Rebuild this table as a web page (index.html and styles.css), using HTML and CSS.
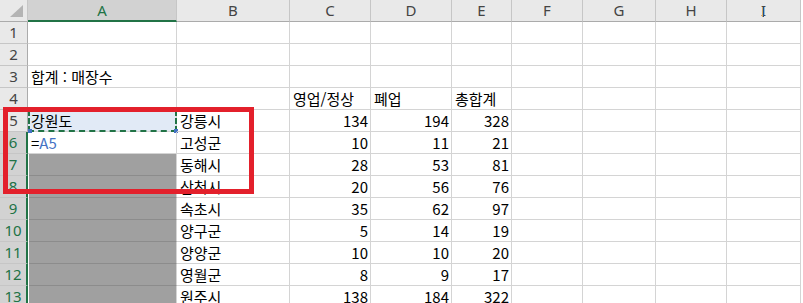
FILE: index.html
```html
<!DOCTYPE html>
<html lang="ko">
<head>
  <meta charset="UTF-8" />
  <meta name="viewport" content="width=device-width, initial-scale=1.0" />
  <title>매장수 집계</title>
  <link rel="stylesheet" href="styles.css">
</head>
<body>
  <div class="sheet">
    <div class="row head">
      <div class="corner"><span class="tri"></span></div>
      <div class="col on">A</div>
      <div class="col">B</div>
      <div class="col">C</div>
      <div class="col">D</div>
      <div class="col">E</div>
      <div class="col">F</div>
      <div class="col">G</div>
      <div class="col">H</div>
      <div class="col">I<span class="ibeam"></span></div>
    </div>

    <div class="row"><div class="num">1</div><div></div><div></div><div></div><div></div><div></div><div></div><div></div><div></div><div></div></div>
    <div class="row"><div class="num">2</div><div></div><div></div><div></div><div></div><div></div><div></div><div></div><div></div><div></div></div>
    <div class="row"><div class="num">3</div><div>합계 : 매장수</div><div></div><div></div><div></div><div></div><div></div><div></div><div></div><div></div></div>
    <div class="row"><div class="num">4</div><div></div><div></div><div>영업/정상</div><div>폐업</div><div>총합계</div><div></div><div></div><div></div><div></div></div>

    <div class="row">
      <div class="num">5</div>
      <div class="ref">강원도
        <span class="h tl"></span><span class="h tr"></span><span class="h bl"></span><span class="h br"></span>
      </div>
      <div>강릉시</div><div class="n">134</div><div class="n">194</div><div class="n">328</div><div></div><div></div><div></div><div></div>
    </div>
    <div class="row"><div class="num sel">6</div><div class="active">=<span class="link">A5</span></div><div>고성군</div><div class="n">10</div><div class="n">11</div><div class="n">21</div><div></div><div></div><div></div><div></div></div>
    <div class="row"><div class="num sel">7</div><div class="fill"></div><div>동해시</div><div class="n">28</div><div class="n">53</div><div class="n">81</div><div></div><div></div><div></div><div></div></div>
    <div class="row"><div class="num sel">8</div><div class="fill"></div><div>삼척시</div><div class="n">20</div><div class="n">56</div><div class="n">76</div><div></div><div></div><div></div><div></div></div>
    <div class="row"><div class="num sel">9</div><div class="fill"></div><div>속초시</div><div class="n">35</div><div class="n">62</div><div class="n">97</div><div></div><div></div><div></div><div></div></div>
    <div class="row"><div class="num sel">10</div><div class="fill"></div><div>양구군</div><div class="n">5</div><div class="n">14</div><div class="n">19</div><div></div><div></div><div></div><div></div></div>
    <div class="row"><div class="num sel">11</div><div class="fill"></div><div>양양군</div><div class="n">10</div><div class="n">10</div><div class="n">20</div><div></div><div></div><div></div><div></div></div>
    <div class="row"><div class="num sel">12</div><div class="fill"></div><div>영월군</div><div class="n">8</div><div class="n">9</div><div class="n">17</div><div></div><div></div><div></div><div></div></div>
    <div class="row"><div class="num sel">13</div><div class="fill"></div><div>원주시</div><div class="n">138</div><div class="n">184</div><div class="n">322</div><div></div><div></div><div></div><div></div></div>

    <!-- red annotation box around rows 5-8 -->
    <div class="mark"></div>
  </div>
</body>
</html>
```

FILE: styles.css
```css
body {
  margin: 0;
  background: #ffffff;
  font-family: "Noto Sans CJK KR", "Noto Sans", sans-serif;
}
.sheet {
  position: relative;
  width: 803px;
  height: 303px;
  overflow: hidden;
}
.row {
  display: grid;
  grid-template-columns: 28px 149px 113px 81px 81px 60px 71px 73px 71px 74px;
  height: 22px;
}
.row > div {
  position: relative;
  box-sizing: border-box;
  height: 22px;
  padding: 0 3px;
  border-right: 1px solid #d4d4d4;
  border-bottom: 1px solid #d4d4d4;
  font-size: 15px;
  line-height: 21px;
  color: #000;
  white-space: nowrap;
  overflow: hidden;
}
.row > .n {
  text-align: right;
  padding-right: 2px;
}

/* column + row headers */
.head > div {
  background: #e9e9e9;
  border-right-color: #c6c6c6;
  border-bottom-color: #ababab;
  font-family: "Noto Sans", sans-serif;
  font-size: 15px;
  color: #444;
  text-align: center;
}
.head > .col.on {
  background: #d2d2d2;
  color: #217346;
  border-bottom: 2px solid #217346;
}
.corner .tri {
  position: absolute;
  right: 4px;
  bottom: 4px;
  width: 0;
  height: 0;
  border-left: 13px solid transparent;
  border-bottom: 12px solid #b4b4b4;
}
.ibeam {
  position: absolute;
  left: 35px;
  top: 7px;
  width: 1px;
  height: 10px;
  background: #d8a860;
  border-right: 1px solid #1f4f8f;
}
.row > .num {
  background: #e9e9e9;
  border-right-color: #ababab;
  border-bottom-color: #c6c6c6;
  font-family: "Noto Sans", sans-serif;
  color: #444;
  text-align: center;
  padding: 0;
}
.row > .num.sel {
  background: #d2d2d2;
  color: #217346;
  border-right: 2px solid #217346;
}

/* cells */
.row > .ref {
  background: #e1eaf6;
  overflow: visible;
  outline: 2px dashed #217346;
  outline-offset: -2px;
}
.h {
  position: absolute;
  width: 4px;
  height: 4px;
  background: #4472c4;
}
.h.tl { left: 0; top: -2px; }
.h.tr { right: -2px; top: -2px; }
.h.bl { left: 0; bottom: -2px; }
.h.br { right: -2px; bottom: -2px; }
.link {
  color: #4472c4;
}
.row > .fill {
  background: #a0a0a0;
  border-bottom-color: #8c8c8c;
  margin-left: 1px;
}

.mark {
  position: absolute;
  left: 3px;
  top: 107px;
  width: 241px;
  height: 77px;
  border: 5px solid #e3202b;
}
```
